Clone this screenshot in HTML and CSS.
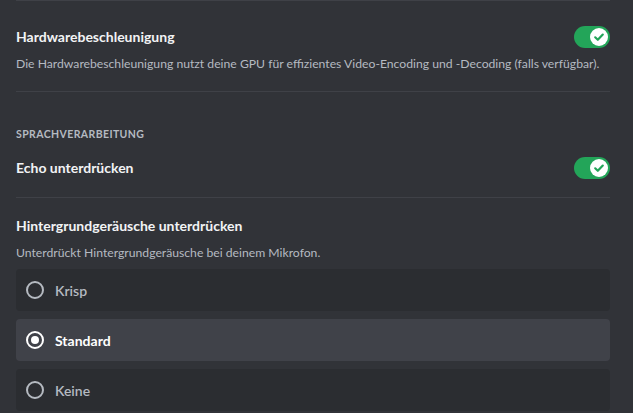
FILE: index.html
```html
<!DOCTYPE html>
<html lang="de">

<head>
    <meta charset="UTF-8">
    <meta name="viewport" content="width=device-width, initial-scale=1.0">
    <title>Sprache &amp; Video</title>
    <link rel="stylesheet" href="styles.css">
</head>

<body>
    <div class="page">
        <div class="divider"></div>

        <div class="setting first">
            <div class="row">
                <span class="title">Hardwarebeschleunigung</span>
                <span class="toggle">
                    <span class="knob">
                        <svg width="18" height="18" viewBox="0 0 18 18">
                            <path d="M5.2 9.3 L7.8 11.8 L12.8 6.6" fill="none" stroke="#23a559" stroke-width="2.2" stroke-linecap="round" stroke-linejoin="round" />
                        </svg>
                    </span>
                </span>
            </div>
            <p class="desc">Die Hardwarebeschleunigung nutzt deine GPU für effizientes Video-Encoding und -Decoding (falls verfügbar).</p>
        </div>

        <div class="divider"></div>

        <h2 class="section">Sprachverarbeitung</h2>

        <div class="setting echo">
            <div class="row">
                <span class="title">Echo unterdrücken</span>
                <span class="toggle">
                    <span class="knob">
                        <svg width="18" height="18" viewBox="0 0 18 18">
                            <path d="M5.2 9.3 L7.8 11.8 L12.8 6.6" fill="none" stroke="#23a559" stroke-width="2.2" stroke-linecap="round" stroke-linejoin="round" />
                        </svg>
                    </span>
                </span>
            </div>
        </div>

        <div class="divider"></div>

        <div class="setting noise">
            <div class="title">Hintergrundgeräusche unterdrücken</div>
            <p class="desc">Unterdrückt Hintergrundgeräusche bei deinem Mikrofon.</p>
            <div class="options">
                <div class="option">
                    <span class="radio"></span>
                    <span class="label">Krisp</span>
                </div>
                <div class="option selected">
                    <span class="radio"></span>
                    <span class="label">Standard</span>
                </div>
                <div class="option">
                    <span class="radio"></span>
                    <span class="label">Keine</span>
                </div>
            </div>
        </div>
    </div>
</body>

</html>
```

FILE: styles.css
```css
* {
    padding: 0;
    margin: 0;
    box-sizing: border-box;
}

body {
    background: #313338;
    font-family: Lato, "Open Sans", sans-serif;
    color: #f2f3f5;
}

.page {
    padding: 0 23px 0 16px;
}

.divider {
    height: 1px;
    background: #3f4147;
}

.row {
    display: flex;
    align-items: center;
    justify-content: space-between;
    height: 22px;
}

.title {
    font-size: 14px;
    font-weight: 700;
    line-height: 20px;
    color: #f2f3f5;
}

.desc {
    font-size: 12.2px;
    line-height: 16px;
    color: #b5bac1;
    white-space: nowrap;
}

.first {
    padding: 25px 0 19px;
}

.first .desc {
    margin-top: 8px;
}

.section {
    margin-top: 35px;
    font-size: 10.5px;
    font-weight: 700;
    line-height: 14px;
    letter-spacing: 0.4px;
    text-transform: uppercase;
    color: #b5bac1;
}

.echo {
    padding: 16px 0 18px;
}

.toggle {
    width: 36px;
    height: 22px;
    border-radius: 11px;
    background: #23a559;
    display: flex;
    align-items: center;
    justify-content: flex-end;
    padding-right: 2px;
}

.knob {
    width: 18px;
    height: 18px;
    border-radius: 50%;
    background: #fff;
    display: flex;
}

.noise {
    padding-top: 18px;
}

.noise .desc {
    margin-top: 9px;
}

.options {
    margin-top: 8px;
    display: flex;
    flex-direction: column;
    gap: 8px;
}

.option {
    height: 42px;
    border-radius: 4px;
    background: #2b2d31;
    display: flex;
    align-items: center;
    padding-left: 10px;
    gap: 11px;
}

.option.selected {
    background: #404249;
}

.radio {
    width: 18px;
    height: 18px;
    border-radius: 50%;
    border: 2px solid #b5bac1;
    display: flex;
    align-items: center;
    justify-content: center;
}

.selected .radio {
    border-color: #fff;
}

.selected .radio::after {
    content: "";
    width: 8px;
    height: 8px;
    border-radius: 50%;
    background: #fff;
}

.label {
    font-size: 14px;
    font-weight: 600;
    color: #b5bac1;
}

.selected .label {
    color: #fff;
    font-weight: 700;
}
```
